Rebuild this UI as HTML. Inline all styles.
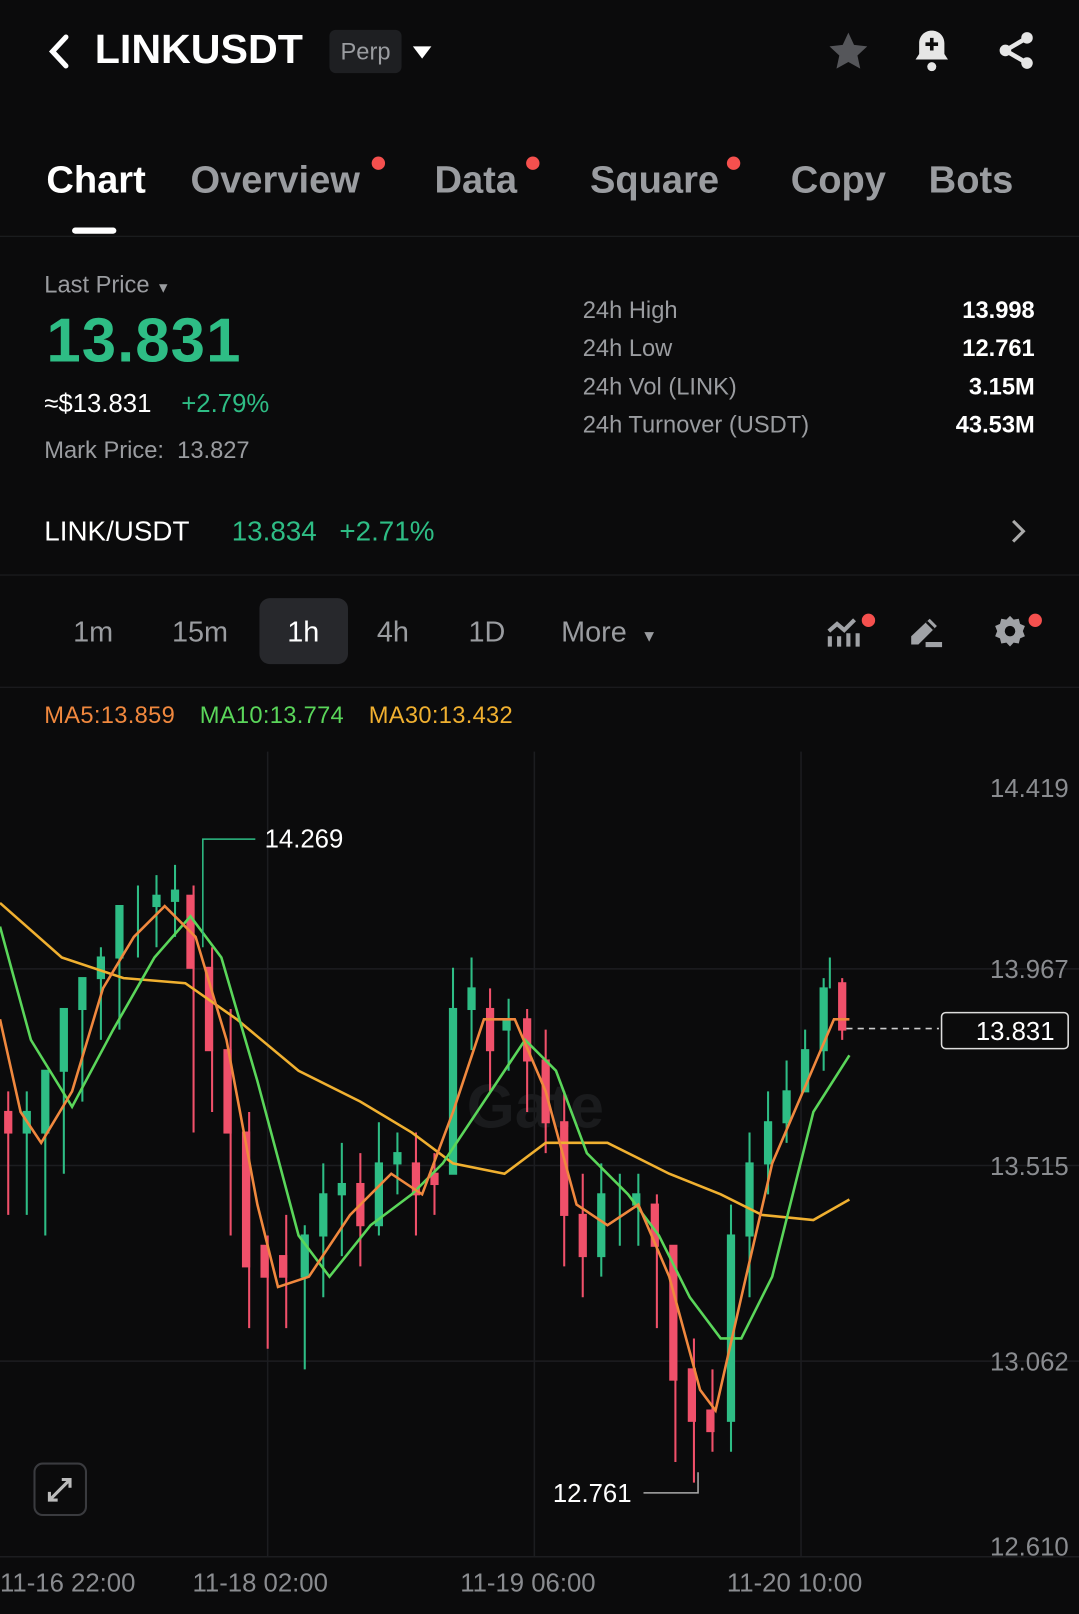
<!DOCTYPE html><html><head><style>
body{margin:0;background:#0b0b0c;overflow:hidden}
#w{position:absolute;left:0;top:0;width:1048px;height:1568px;transform:scale(1.02958);transform-origin:0 0;font-family:"Liberation Sans",sans-serif;color:#fff;background:#0b0b0c}
.a{position:absolute;white-space:nowrap}
.g{color:#9a9ca0}.gr{color:#2ebd85}
.dot{position:absolute;width:13px;height:13px;border-radius:50%;background:#f5504e}
.hr{position:absolute;left:0;width:1048px;height:1px;background:#1f2023}
</style></head><body><div id="w">
<svg class="a" style="left:44px;top:32px" width="26" height="36" viewBox="0 0 26 36"><path d="M20 4 L7 18 L20 32" stroke="#fff" stroke-width="5" fill="none" stroke-linecap="round"/></svg>
<div class="a" style="left:92px;top:26px;font-size:40px;font-weight:bold">LINKUSDT</div>
<div class="a" style="left:320px;top:29px;width:70px;height:42px;background:#1e1f22;border-radius:6px;color:#9a9ca0;font-size:23px;text-align:center;line-height:42px">Perp</div>
<svg class="a" style="left:400px;top:44px" width="20" height="14"><path d="M1 1 H19 L10 13Z" fill="#fff"/></svg>
<svg class="a" style="left:802px;top:28px" width="44" height="44" viewBox="0 0 24 24"><path d="M12 2l3 6.5 7 .8-5.2 4.8 1.5 7L12 17.6 5.7 21.1l1.5-7L2 9.3l7-.8z" fill="#55565a"/></svg>
<svg class="a" style="left:884px;top:26px" width="42" height="46" viewBox="0 0 24 26"><path d="M12 2c-4 0-7 3-7 7v6l-2 3h18l-2-3V9c0-4-3-7-7-7z" fill="#e6e6e6"/><circle cx="12" cy="22" r="2.5" fill="#e6e6e6"/><path d="M12 6v7M8.5 9.5h7" stroke="#0b0b0c" stroke-width="2"/></svg>
<svg class="a" style="left:966px;top:27px" width="42" height="44" viewBox="0 0 24 24"><circle cx="18" cy="5" r="3.2" fill="#e6e6e6"/><circle cx="6" cy="12" r="3.2" fill="#e6e6e6"/><circle cx="18" cy="19" r="3.2" fill="#e6e6e6"/><path d="M18 5L6 12L18 19" stroke="#e6e6e6" stroke-width="2.5" fill="none"/></svg>

<div class="a" style="left:45px;top:154px;font-size:37px;font-weight:bold">Chart</div>
<div class="a g" style="left:185px;top:154px;font-size:37px;font-weight:bold">Overview</div><div class="dot" style="left:361px;top:152px"></div>
<div class="a g" style="left:422px;top:154px;font-size:37px;font-weight:bold">Data</div><div class="dot" style="left:511px;top:152px"></div>
<div class="a g" style="left:573px;top:154px;font-size:37px;font-weight:bold">Square</div><div class="dot" style="left:706px;top:152px"></div>
<div class="a g" style="left:768px;top:154px;font-size:37px;font-weight:bold">Copy</div>
<div class="a g" style="left:902px;top:154px;font-size:37px;font-weight:bold">Bots</div>
<div class="a" style="left:70px;top:221px;width:43px;height:6px;border-radius:3px;background:#fff"></div>
<div class="hr" style="top:229px"></div>

<div class="a g" style="left:43px;top:263px;font-size:23px">Last Price <span style="font-size:14px">▼</span></div>
<div class="a gr" style="left:45px;top:296px;font-size:60px;font-weight:bold;letter-spacing:1px">13.831</div>
<div class="a" style="left:43px;top:378px;font-size:25px">≈$13.831 <span class="gr" style="margin-left:22px">+2.79%</span></div>
<div class="a g" style="left:43px;top:424px;font-size:23px">Mark Price:&nbsp; 13.827</div>
<div class="a g" style="left:566px;top:283px;font-size:23px;line-height:37px">24h High<br>24h Low<br>24h Vol (LINK)<br>24h Turnover (USDT)</div>
<div class="a" style="right:43px;top:283px;font-size:23px;line-height:37px;text-align:right;font-weight:bold">13.998<br>12.761<br>3.15M<br>43.53M</div>

<div class="a" style="left:43px;top:501px;font-size:27px">LINK/USDT <span class="gr" style="margin-left:34px">13.834</span><span class="gr" style="margin-left:22px">+2.71%</span></div>
<svg class="a" style="left:980px;top:503px" width="18" height="26"><path d="M4 3l10 10-10 10" stroke="#aaa" stroke-width="3" fill="none"/></svg>
<div class="hr" style="top:558px"></div>

<div class="a" style="left:252px;top:581px;width:86px;height:64px;background:#27282c;border-radius:10px"></div>
<div class="a g" style="left:71px;top:598px;font-size:28px">1m</div>
<div class="a g" style="left:167px;top:598px;font-size:28px">15m</div>
<div class="a" style="left:279px;top:598px;font-size:28px">1h</div>
<div class="a g" style="left:366px;top:598px;font-size:28px">4h</div>
<div class="a g" style="left:455px;top:598px;font-size:28px">1D</div>
<div class="a g" style="left:545px;top:598px;font-size:28px">More <span style="font-size:16px;margin-left:6px">▼</span></div>
<svg class="a" style="left:802px;top:598px" width="34" height="32" viewBox="0 0 34 32"><path d="M3 15l8-7 7 6 10-10" stroke="#a0a2a6" stroke-width="4" fill="none"/><path d="M4 20v10M13 20v10M22 17v13M31 17v13" stroke="#a0a2a6" stroke-width="4"/></svg><div class="dot" style="left:837px;top:596px"></div>
<svg class="a" style="left:883px;top:598px" width="34" height="32" viewBox="0 0 34 32"><path d="M2 28v-8L20 3l7 7-18 18z" fill="#a0a2a6"/><path d="M17 6l7 7" stroke="#0b0b0c" stroke-width="2.5"/><path d="M16 28h16" stroke="#a0a2a6" stroke-width="5"/></svg>
<svg class="a" style="left:964px;top:596px" width="34" height="34" viewBox="0 0 24 24"><path d="M12 1.5l2.5 2.6 3.5-.6.9 3.5 3.3 1.5-1.4 3.5 1.4 3.5-3.3 1.5-.9 3.5-3.5-.6L12 22.5l-2.5-2.6-3.5.6-.9-3.5L1.8 15.5 3.2 12 1.8 8.5l3.3-1.5.9-3.5 3.5.6z" fill="#a0a2a6"/><circle cx="12" cy="12" r="3.6" fill="#0b0b0c"/></svg><div class="dot" style="left:999px;top:596px"></div>
<div class="hr" style="top:667px"></div>

<div class="a" style="left:43px;top:681px;font-size:23px;letter-spacing:0.3px"><span style="color:#f0883e">MA5:13.859</span><span style="color:#5ad65a;margin-left:24px">MA10:13.774</span><span style="color:#f0b030;margin-left:24px">MA30:13.432</span></div>

<svg class="a" style="left:0;top:700px" width="1048" height="868" viewBox="0 700 1048 868">
<g stroke="#1c1d20" stroke-width="1.5"><path d="M260 730V1512M519 730V1512M778 730V1512M0 941H1048M0 1132H1048M0 1322H1048M0 1512H1048"/></g>
<text x="520" y="1095" font-size="60" font-weight="bold" fill="#1a1b1d" text-anchor="middle" font-family="Liberation Sans">Gate</text>
<g font-family="Liberation Sans" font-size="25" fill="#8a8c90" text-anchor="end"><text x="1038" y="774">14.419</text><text x="1038" y="950">13.967</text><text x="1038" y="1141">13.515</text><text x="1038" y="1331">13.062</text><text x="1038" y="1511">12.610</text></g>
<g id="c" stroke-width="2">
<g fill="#2ebd85" stroke="#2ebd85">
<path d="M26 1060V1180M44 1060V1200M62 1010V1140M80 950V1070M98 920V1010M116 880V1000M134 860V930M152 850V920M170 840V910M296 1190V1330M314 1130V1260M332 1110V1220M368 1090V1200M386 1100V1160M440 940V1060M458 930V1020M494 970V1040M584 1130V1240M602 1140V1210M620 1140V1210M710 1170V1410M728 1100V1260M746 1060V1160M764 1030V1110M782 1000V1060M800 950V1040M806 930V960"/>
<rect x="23" y="1080" width="6" height="20"/><rect x="41" y="1040" width="6" height="60"/><rect x="59" y="980" width="6" height="60"/><rect x="77" y="950" width="6" height="30"/><rect x="95" y="930" width="6" height="20"/><rect x="113" y="880" width="6" height="50"/><rect x="149" y="870" width="6" height="10"/><rect x="167" y="865" width="6" height="10"/><rect x="293" y="1200" width="6" height="40"/><rect x="311" y="1160" width="6" height="40"/><rect x="329" y="1150" width="6" height="10"/><rect x="365" y="1130" width="6" height="60"/><rect x="383" y="1120" width="6" height="10"/><rect x="437" y="980" width="6" height="160"/><rect x="455" y="960" width="6" height="20"/><rect x="489" y="990" width="6" height="10"/><rect x="581" y="1160" width="6" height="60"/><rect x="615" y="1160" width="6" height="10"/><rect x="707" y="1200" width="6" height="180"/><rect x="725" y="1130" width="6" height="70"/><rect x="743" y="1090" width="6" height="40"/><rect x="761" y="1060" width="6" height="30"/><rect x="779" y="1020" width="6" height="40"/><rect x="797" y="960" width="6" height="60"/>
</g>
<g fill="#f0506a" stroke="#f0506a">
<path d="M8 1060V1180M188 860V1100M206 920V1080M224 980V1200M242 1080V1290M260 1200V1310M278 1180V1290M350 1120V1230M404 1100V1200M422 1120V1180M476 960V1060M512 980V1080M530 1000V1120M548 1060V1230M566 1140V1260M638 1160V1290M656 1210V1420M674 1300V1440M692 1330V1410M818 950V1010"/>
<rect x="5" y="1080" width="6" height="20"/><rect x="182" y="870" width="6" height="70"/><rect x="200" y="940" width="6" height="80"/><rect x="218" y="1020" width="6" height="80"/><rect x="236" y="1100" width="6" height="130"/><rect x="254" y="1210" width="6" height="30"/><rect x="272" y="1220" width="6" height="20"/><rect x="347" y="1150" width="6" height="40"/><rect x="401" y="1130" width="6" height="30"/><rect x="419" y="1140" width="6" height="10"/><rect x="473" y="980" width="6" height="40"/><rect x="509" y="990" width="6" height="40"/><rect x="527" y="1030" width="6" height="60"/><rect x="545" y="1090" width="6" height="90"/><rect x="563" y="1180" width="6" height="40"/><rect x="633" y="1170" width="6" height="40"/><rect x="651" y="1210" width="6" height="130"/><rect x="669" y="1330" width="6" height="50"/><rect x="687" y="1370" width="6" height="20"/><rect x="815" y="955" width="6" height="45"/>
</g></g>
<g fill="none" stroke-width="2.5">
<polyline stroke="#f0b030" points="0,877 60,930 120,950 180,955 230,990 290,1040 350,1070 400,1100 440,1130 490,1140 530,1110 590,1110 650,1140 700,1160 740,1180 790,1185 825,1165"/>
<polyline stroke="#5ad65a" points="0,900 30,1010 70,1075 110,1000 150,930 185,890 215,930 250,1050 290,1200 320,1240 360,1190 400,1160 430,1130 470,1070 510,1010 540,1040 570,1120 610,1160 640,1200 670,1260 700,1300 720,1300 750,1240 790,1080 825,1025"/>
<polyline stroke="#f0883e" points="0,990 20,1080 40,1110 70,1060 100,960 130,910 160,880 190,910 220,1010 250,1170 270,1250 300,1240 340,1180 380,1140 410,1160 440,1080 470,990 500,990 530,1060 560,1170 590,1190 620,1170 650,1240 680,1350 695,1370 720,1260 750,1130 780,1060 810,990 825,990"/>
</g>
<path d="M197 920V815H248" stroke="#2ebd85" stroke-width="1.5" fill="none"/>
<text x="257" y="823" font-family="Liberation Sans" font-size="25" fill="#fff">14.269</text>
<path d="M625 1450H678V1430" stroke="#aaa" stroke-width="1.5" fill="none"/>
<text x="537" y="1459" font-family="Liberation Sans" font-size="25" fill="#fff">12.761</text>
<path d="M822 999H912" stroke="#ccc" stroke-width="1.5" stroke-dasharray="6 5"/>
<rect x="914.5" y="983.5" width="123" height="35" rx="4" fill="#0b0b0c" stroke="#ddd" stroke-width="1.5"/>
<text x="986" y="1010" font-family="Liberation Sans" font-size="25" fill="#fff" text-anchor="middle">13.831</text>
<rect x="33.5" y="1421.5" width="50" height="50" rx="8" fill="none" stroke="#3a3b3f" stroke-width="2"/>
<path d="M48 1457l20-20M60 1437h8v8M48 1449v8h8" stroke="#bbb" stroke-width="3" fill="none"/>
<g font-family="Liberation Sans" font-size="25" fill="#8a8c90"><text x="0" y="1546">11-16 22:00</text><text x="187" y="1546">11-18 02:00</text><text x="447" y="1546">11-19 06:00</text><text x="706" y="1546">11-20 10:00</text></g>
</svg>
</div></body></html>
